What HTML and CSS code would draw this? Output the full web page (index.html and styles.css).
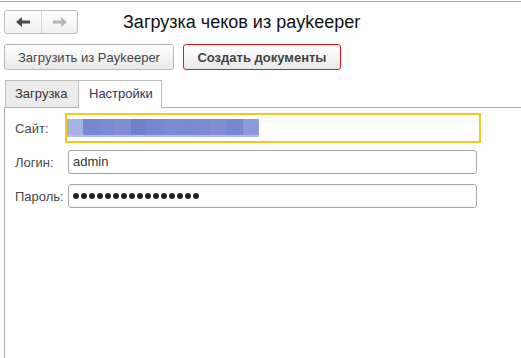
FILE: index.html
```html
<!DOCTYPE html>
<html lang="ru">
<head>
  <meta charset="UTF-8">
  <title>Загрузка чеков из paykeeper</title>
  <link rel="stylesheet" href="styles.css">
</head>
<body>
  <div class="window">
    <div class="head">
      <div class="nav">
        <button class="nav-btn" type="button" title="Назад">
          <svg width="14" height="10" viewBox="0 0 14 10"><path d="M0 5 L6 0 L6 3.5 L14 3.5 L14 6.5 L6 6.5 L6 10 Z" fill="#4a4a4a"/></svg>
        </button>
        <button class="nav-btn" type="button" title="Вперёд">
          <svg width="14" height="10" viewBox="0 0 14 10"><path d="M14 5 L8 0 L8 3.5 L0 3.5 L0 6.5 L8 6.5 L8 10 Z" fill="#b4b4b4"/></svg>
        </button>
      </div>
      <h1>Загрузка чеков из paykeeper</h1>
    </div>

    <div class="actions">
      <button class="btn" type="button">Загрузить из Paykeeper</button>
      <button class="btn btn-default" type="button">Создать документы</button>
    </div>

    <div class="tabs">
      <div class="tab">Загрузка</div>
      <div class="tab active">Настройки</div>
    </div>

    <div class="panel">
      <form class="settings">
        <label for="site">Сайт:</label>
        <div class="field focused" id="site">
          <div class="blur">
            <span class="b1"></span><span class="b2"></span><span class="b3"></span><span class="b4"></span>
            <span class="b5"></span><span class="b2"></span><span class="b3"></span><span class="b6"></span>
            <span class="b3"></span><span class="b4"></span><span class="b2"></span><span class="b7"></span>
          </div>
        </div>

        <label for="login">Логин:</label>
        <div class="field" id="login">admin</div>

        <label for="pass">Пароль:</label>
        <div class="field" id="pass">
          <span class="dot"></span><span class="dot"></span><span class="dot"></span><span class="dot"></span>
          <span class="dot"></span><span class="dot"></span><span class="dot"></span><span class="dot"></span>
          <span class="dot"></span><span class="dot"></span><span class="dot"></span><span class="dot"></span>
          <span class="dot"></span><span class="dot"></span><span class="dot"></span><span class="dot"></span>
        </div>
      </form>
    </div>
  </div>
</body>
</html>
```

FILE: styles.css
```css
* {
  box-sizing: border-box;
}

html, body {
  height: 100%;
}

body {
  margin: 0;
  background: #fff;
  font-family: 'Liberation Sans', Arial, sans-serif;
  color: #333;
}

.window {
  height: 100%;
  margin-top: 1px;
  border-top: 1px solid #a8a8a8;
  display: flex;
  flex-direction: column;
}

.head {
  display: flex;
  align-items: center;
  padding: 8px 0 0 4px;
  gap: 45px;
}

.nav {
  display: flex;
  height: 24px;
  border: 1px solid #bdbdbd;
  border-radius: 3px;
  background: linear-gradient(#ffffff, #f1f1f1);
}

.nav-btn {
  width: 36px;
  height: 22px;
  border: none;
  background: transparent;
  padding: 0;
  display: flex;
  align-items: center;
  justify-content: center;
}

.nav-btn + .nav-btn {
  border-left: 1px solid #d4d4d4;
}

h1 {
  margin: 0;
  font-size: 18px;
  font-weight: normal;
  color: #111;
}

.actions {
  display: flex;
  gap: 9px;
  padding-left: 4px;
  margin-top: 10px;
}

.btn {
  height: 26px;
  padding: 0 13px;
  border: 1px solid #b8b8b8;
  border-radius: 3px;
  background: linear-gradient(#ffffff, #e9e9e9);
  font-family: inherit;
  font-size: 13px;
  color: #444;
}

.btn-default {
  width: 158px;
  border-color: #e41818;
  font-weight: bold;
}

.tabs {
  display: flex;
  margin: 10px 0 0 4px;
  padding-left: 1px;
}

.tab {
  width: 74px;
  height: 27px;
  padding-left: 9px;
  line-height: 26px;
  font-size: 13px;
  color: #333;
  background: #ececec;
  border: 1px solid #bcbcbc;
  border-bottom: none;
}

.tab.active {
  width: 84px;
  height: 28px;
  padding-left: 10px;
  margin-bottom: -1px;
  margin-left: -1px;
  background: #fff;
  color: #34305a;
  position: relative;
}

.panel {
  flex: 1;
  margin-left: 4px;
  border-top: 1px solid #b4b4b4;
  border-left: 1px solid #b4b4b4;
  padding: 8px 0 0 10px;
}

.settings {
  display: grid;
  grid-template-columns: 53px 409px;
  row-gap: 10px;
  align-items: center;
}

.settings label {
  font-size: 13px;
  color: #4a4a4a;
}

.field {
  height: 24px;
  border: 1px solid #a5a5a5;
  border-radius: 3px;
  padding-left: 4px;
  font-size: 13px;
  line-height: 22px;
  color: #333;
  display: flex;
  align-items: center;
}

.field.focused {
  height: 30px;
  margin: -3px -4px -3px -3px;
  padding: 2px 0 0 0;
  border: 2px solid #f7c71a;
  border-radius: 0;
  align-items: flex-start;
}

.blur {
  display: flex;
  height: 18px;
  margin-top: 2px;
  border-bottom: 2px solid #b5bde8;
}

.blur span {
  width: 16px;
}

.blur .b1 { background: #a8b3e3; }
.blur .b2 { background: #7688cf; }
.blur .b3 { background: #7b8bd1; }
.blur .b4 { background: #7f8fd2; }
.blur .b5 { background: #6f80cc; }
.blur .b6 { background: #7a8ad0; }
.blur .b7 { background: #8c9bd8; }

.dot {
  width: 6px;
  height: 6px;
  border-radius: 50%;
  background: #222;
  margin-right: 2px;
  flex: none;
}
```
